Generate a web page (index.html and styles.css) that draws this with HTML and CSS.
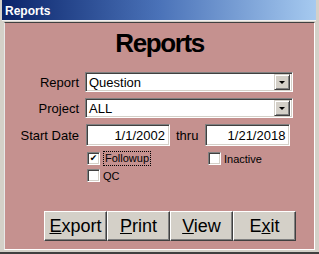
FILE: index.html
```html
<!DOCTYPE html>
<html lang="en">
<head>
    <meta charset="UTF-8">
    <title>Reports</title>
    <link rel="stylesheet" href="styles.css">
</head>
<body>
    <div class="window">
        <div class="titlebar">Reports</div>
        <div class="client">
            <h1>Reports</h1>

            <div class="form">
                <div class="label">Report</div>
                <div class="combo">
                    <span class="combo-text">Question</span>
                    <span class="drop"><span class="arrow"></span></span>
                </div>

                <div class="label">Project</div>
                <div class="combo">
                    <span class="combo-text">ALL</span>
                    <span class="drop"><span class="arrow"></span></span>
                </div>

                <div class="label">Start Date</div>
                <div class="dates">
                    <div class="field date-from">1/1/2002</div>
                    <span class="thru">thru</span>
                    <div class="field date-to">1/21/2018</div>
                </div>
            </div>

            <div class="checks">
                <div class="check-col first">
                    <label class="check"><span class="box checked">&#10004;</span><span class="focus">Followup</span></label>
                    <label class="check"><span class="box"></span><span>QC</span></label>
                </div>
                <div class="check-col">
                    <label class="check"><span class="box"></span><span>Inactive</span></label>
                </div>
            </div>

            <div class="buttons">
                <button><u>E</u>xport</button>
                <button><u>P</u>rint</button>
                <button><u>V</u>iew</button>
                <button>E<u>x</u>it</button>
            </div>
        </div>
    </div>
</body>
</html>
```
FILE: styles.css
```css
body {
    margin: 0;
    background-color: #d4d0c8;
    font-family: "Liberation Sans", Arial, sans-serif;
    color: #000;
}
.window {
    width: 319px;
    height: 254px;
    box-sizing: border-box;
    background-color: #d4d0c8;
    border-bottom: 2px solid #404040;
    overflow: hidden;
}
.titlebar {
    margin: 0 3px 0 2px;
    height: 20px;
    line-height: 23px;
    padding-left: 3px;
    background: linear-gradient(to right, #0a246a, #4a72b8 50%, #a6caf0);
    color: #fff;
    font-weight: bold;
    font-size: 12px;
    border-bottom: 1px solid #f0f0f0;
    overflow: hidden;
}
.client {
    margin: 1px 0 0 4px;
    width: 311px;
    height: 228px;
    box-sizing: border-box;
    background-color: #c5918f;
    border-top: 1px solid #404040;
    border-left: 1px solid #e8e8e8;
    border-right: 1px solid #fff;
    border-bottom: 1px solid #fff;
}
h1 {
    margin: 5px 0 0 0;
    height: 30px;
    line-height: 30px;
    text-align: center;
    font-size: 26px;
    letter-spacing: -1.4px;
    font-weight: bold;
}
.form {
    margin-top: 14px;
    display: grid;
    grid-template-columns: 74px 208px;
    grid-template-rows: 20px 20px 22px;
    column-gap: 6px;
    row-gap: 6px;
    font-size: 13px;
}
.label {
    text-align: right;
    align-self: center;
}
.combo, .field {
    box-sizing: border-box;
    background: #fff;
    border-top: 1px solid #808080;
    border-left: 1px solid #808080;
    border-right: 1px solid #fff;
    border-bottom: 1px solid #fff;
    box-shadow: inset 1px 1px #404040, inset -1px -1px #d4d0c8;
}
.combo {
    display: flex;
    align-items: center;
    padding: 2px;
}
.combo-text {
    flex: 1;
    padding-left: 1px;
}
.drop {
    width: 16px;
    height: 16px;
    box-sizing: border-box;
    background: #d4d0c8;
    border-top: 1px solid #d4d0c8;
    border-left: 1px solid #d4d0c8;
    border-right: 1px solid #404040;
    border-bottom: 1px solid #404040;
    box-shadow: inset 1px 1px #fff, inset -1px -1px #808080;
    display: flex;
    align-items: center;
    justify-content: center;
}
.arrow {
    width: 0;
    height: 0;
    border-left: 3px solid transparent;
    border-right: 3px solid transparent;
    border-top: 3px solid #000;
    margin-top: 1px;
}
.dates {
    display: flex;
    align-items: stretch;
}
.field {
    text-align: right;
    padding: 2px 4px 0 0;
    line-height: 17px;
}
.date-from {
    width: 84px;
    margin-left: 1px;
}
.thru {
    margin: 0 7px 0 6px;
    align-self: center;
}
.date-to {
    width: 85px;
}
.checks {
    margin: 5px 0 0 82px;
    display: flex;
    font-size: 11px;
}
.check-col {
    display: flex;
    flex-direction: column;
    gap: 2px;
}
.check-col.first {
    width: 121px;
}
.check {
    display: flex;
    align-items: center;
    height: 15px;
    gap: 3px;
}
.box {
    width: 13px;
    height: 13px;
    box-sizing: border-box;
    background: #fff;
    border-top: 1px solid #808080;
    border-left: 1px solid #808080;
    border-right: 1px solid #fff;
    border-bottom: 1px solid #fff;
    box-shadow: inset 1px 1px #404040, inset -1px -1px #d4d0c8;
    font-size: 9px;
    line-height: 11px;
    text-align: center;
    font-family: "DejaVu Sans", sans-serif;
}
.focus {
    border: 1px dotted #000;
    padding: 0 1px;
    line-height: 13px;
}
.buttons {
    margin: 28px 0 0 39px;
    display: flex;
}
button {
    width: 63px;
    height: 30px;
    box-sizing: border-box;
    background: #d4d0c8;
    border-top: 1px solid #fff;
    border-left: 1px solid #fff;
    border-right: 1px solid #404040;
    border-bottom: 1px solid #404040;
    box-shadow: inset -1px -1px #808080;
    font-family: "Liberation Sans", Arial, sans-serif;
    font-size: 18px;
    padding: 0;
    color: #000;
}
```
